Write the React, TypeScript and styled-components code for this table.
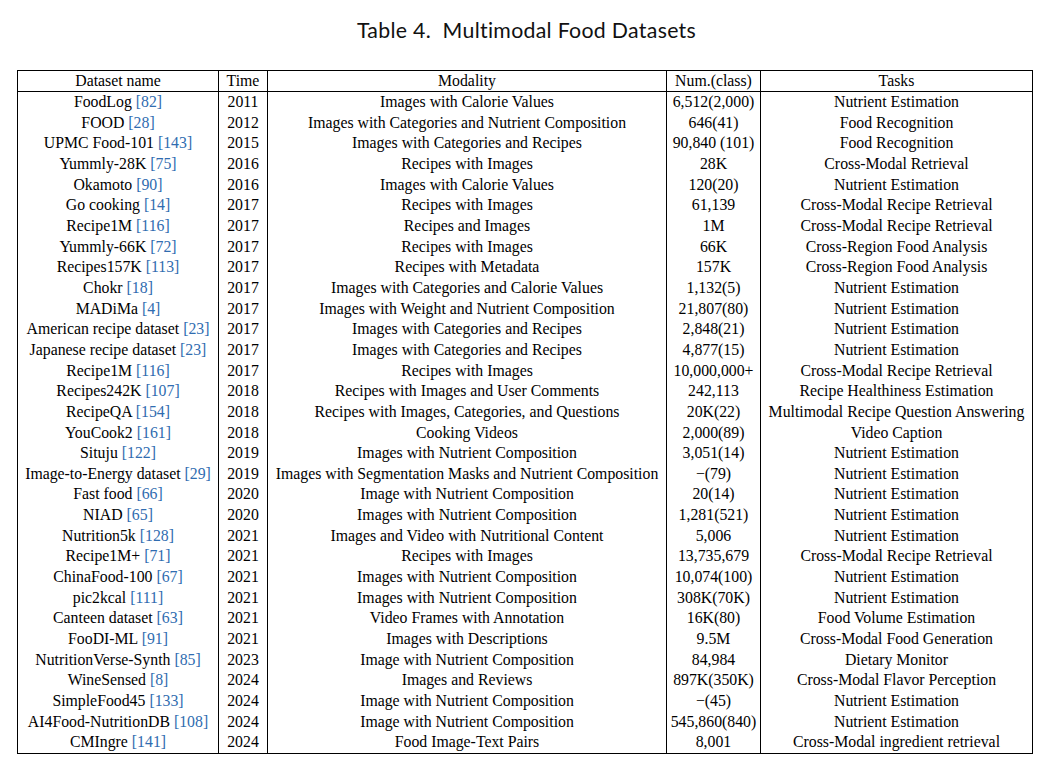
import React from "react";
import styled, { createGlobalStyle } from "styled-components";

const GlobalStyle = createGlobalStyle`
  html, body {
    margin: 0;
    padding: 0;
    background: #ffffff;
  }
  body {
    font-family: "Liberation Serif", "Times New Roman", serif;
    color: #000;
  }
`;

interface Dataset {
  name: string;
  cite: number;
  year: number;
  modality: string;
  num: string;
  task: string;
}

const rows: Dataset[] = [
  { name: "FoodLog", cite: 82, year: 2011, modality: "Images with Calorie Values", num: "6,512(2,000)", task: "Nutrient Estimation" },
  { name: "FOOD", cite: 28, year: 2012, modality: "Images with Categories and Nutrient Composition", num: "646(41)", task: "Food Recognition" },
  { name: "UPMC Food-101", cite: 143, year: 2015, modality: "Images with Categories and Recipes", num: "90,840 (101)", task: "Food Recognition" },
  { name: "Yummly-28K", cite: 75, year: 2016, modality: "Recipes with Images", num: "28K", task: "Cross-Modal Retrieval" },
  { name: "Okamoto", cite: 90, year: 2016, modality: "Images with Calorie Values", num: "120(20)", task: "Nutrient Estimation" },
  { name: "Go cooking", cite: 14, year: 2017, modality: "Recipes with Images", num: "61,139", task: "Cross-Modal Recipe Retrieval" },
  { name: "Recipe1M", cite: 116, year: 2017, modality: "Recipes and Images", num: "1M", task: "Cross-Modal Recipe Retrieval" },
  { name: "Yummly-66K", cite: 72, year: 2017, modality: "Recipes with Images", num: "66K", task: "Cross-Region Food Analysis" },
  { name: "Recipes157K", cite: 113, year: 2017, modality: "Recipes with Metadata", num: "157K", task: "Cross-Region Food Analysis" },
  { name: "Chokr", cite: 18, year: 2017, modality: "Images with Categories and Calorie Values", num: "1,132(5)", task: "Nutrient Estimation" },
  { name: "MADiMa", cite: 4, year: 2017, modality: "Images with Weight and Nutrient Composition", num: "21,807(80)", task: "Nutrient Estimation" },
  { name: "American recipe dataset", cite: 23, year: 2017, modality: "Images with Categories and Recipes", num: "2,848(21)", task: "Nutrient Estimation" },
  { name: "Japanese recipe dataset", cite: 23, year: 2017, modality: "Images with Categories and Recipes", num: "4,877(15)", task: "Nutrient Estimation" },
  { name: "Recipe1M", cite: 116, year: 2017, modality: "Recipes with Images", num: "10,000,000+", task: "Cross-Modal Recipe Retrieval" },
  { name: "Recipes242K", cite: 107, year: 2018, modality: "Recipes with Images and User Comments", num: "242,113", task: "Recipe Healthiness Estimation" },
  { name: "RecipeQA", cite: 154, year: 2018, modality: "Recipes with Images, Categories, and Questions", num: "20K(22)", task: "Multimodal Recipe Question Answering" },
  { name: "YouCook2", cite: 161, year: 2018, modality: "Cooking Videos", num: "2,000(89)", task: "Video Caption" },
  { name: "Situju", cite: 122, year: 2019, modality: "Images with Nutrient Composition", num: "3,051(14)", task: "Nutrient Estimation" },
  { name: "Image-to-Energy dataset", cite: 29, year: 2019, modality: "Images with Segmentation Masks and Nutrient Composition", num: "\u2212(79)", task: "Nutrient Estimation" },
  { name: "Fast food", cite: 66, year: 2020, modality: "Image with Nutrient Composition", num: "20(14)", task: "Nutrient Estimation" },
  { name: "NIAD", cite: 65, year: 2020, modality: "Images with Nutrient Composition", num: "1,281(521)", task: "Nutrient Estimation" },
  { name: "Nutrition5k", cite: 128, year: 2021, modality: "Images and Video with Nutritional Content", num: "5,006", task: "Nutrient Estimation" },
  { name: "Recipe1M+", cite: 71, year: 2021, modality: "Recipes with Images", num: "13,735,679", task: "Cross-Modal Recipe Retrieval" },
  { name: "ChinaFood-100", cite: 67, year: 2021, modality: "Images with Nutrient Composition", num: "10,074(100)", task: "Nutrient Estimation" },
  { name: "pic2kcal", cite: 111, year: 2021, modality: "Images with Nutrient Composition", num: "308K(70K)", task: "Nutrient Estimation" },
  { name: "Canteen dataset", cite: 63, year: 2021, modality: "Video Frames with Annotation", num: "16K(80)", task: "Food Volume Estimation" },
  { name: "FooDI-ML", cite: 91, year: 2021, modality: "Images with Descriptions", num: "9.5M", task: "Cross-Modal Food Generation" },
  { name: "NutritionVerse-Synth", cite: 85, year: 2023, modality: "Image with Nutrient Composition", num: "84,984", task: "Dietary Monitor" },
  { name: "WineSensed", cite: 8, year: 2024, modality: "Images and Reviews", num: "897K(350K)", task: "Cross-Modal Flavor Perception" },
  { name: "SimpleFood45", cite: 133, year: 2024, modality: "Image with Nutrient Composition", num: "\u2212(45)", task: "Nutrient Estimation" },
  { name: "AI4Food-NutritionDB", cite: 108, year: 2024, modality: "Image with Nutrient Composition", num: "545,860(840)", task: "Nutrient Estimation" },
  { name: "CMIngre", cite: 141, year: 2024, modality: "Food Image-Text Pairs", num: "8,001", task: "Cross-Modal ingredient retrieval" },
];

const columns = [
  { label: "Dataset name", width: 201 },
  { label: "Time", width: 49 },
  { label: "Modality", width: 399 },
  { label: "Num.(class)", width: 94 },
  { label: "Tasks", width: 272 },
];

const Page = styled.div`
  width: 1044px;
  height: 766px;
  padding: 0 0 0 17px;
  box-sizing: border-box;
  overflow: hidden;
`;

const Caption = styled.h1`
  width: 1015px;
  margin: 0;
  padding: 17px 0 0 4px;
  height: 70px;
  box-sizing: border-box;
  text-align: center;
  font-family: "Lato", "Open Sans", sans-serif;
  font-weight: 400;
  font-size: 21.3px;
  letter-spacing: 0.3px;
  color: #111;
`;

const Grid = styled.table`
  border-collapse: collapse;
  table-layout: fixed;
  width: 1015px;
  border: 1px solid #000;
  font-size: 15.8px;
`;

const Col = styled.col<{ $w: number }>`
  width: ${(p) => p.$w}px;
`;

const HeadCell = styled.th`
  height: 20px;
  padding: 0;
  font-weight: 400;
  text-align: center;
  border-left: 1px solid #000;
  border-bottom: 1px solid #000;
  white-space: nowrap;
  overflow: hidden;
`;

const Row = styled.tr`
  height: 20.65px;
`;

const Cell = styled.td`
  padding: 0;
  text-align: center;
  border-left: 1px solid #000;
  white-space: nowrap;
  line-height: 20.65px;
`;

const Cite = styled.span`
  color: #2f6cb0;
`;

export default function App() {
  return (
    <Page>
      <GlobalStyle />
      <Caption>Table 4.&nbsp; Multimodal Food Datasets</Caption>
      <Grid>
        <colgroup>
          {columns.map((c) => (
            <Col key={c.label} $w={c.width} />
          ))}
        </colgroup>
        <thead>
          <tr>
            {columns.map((c) => (
              <HeadCell key={c.label}>{c.label}</HeadCell>
            ))}
          </tr>
        </thead>
        <tbody>
          {rows.map((r, i) => (
            <Row key={i}>
              <Cell>
                {r.name} <Cite>[{r.cite}]</Cite>
              </Cell>
              <Cell>{r.year}</Cell>
              <Cell>{r.modality}</Cell>
              <Cell>{r.num}</Cell>
              <Cell>{r.task}</Cell>
            </Row>
          ))}
        </tbody>
      </Grid>
    </Page>
  );
}
